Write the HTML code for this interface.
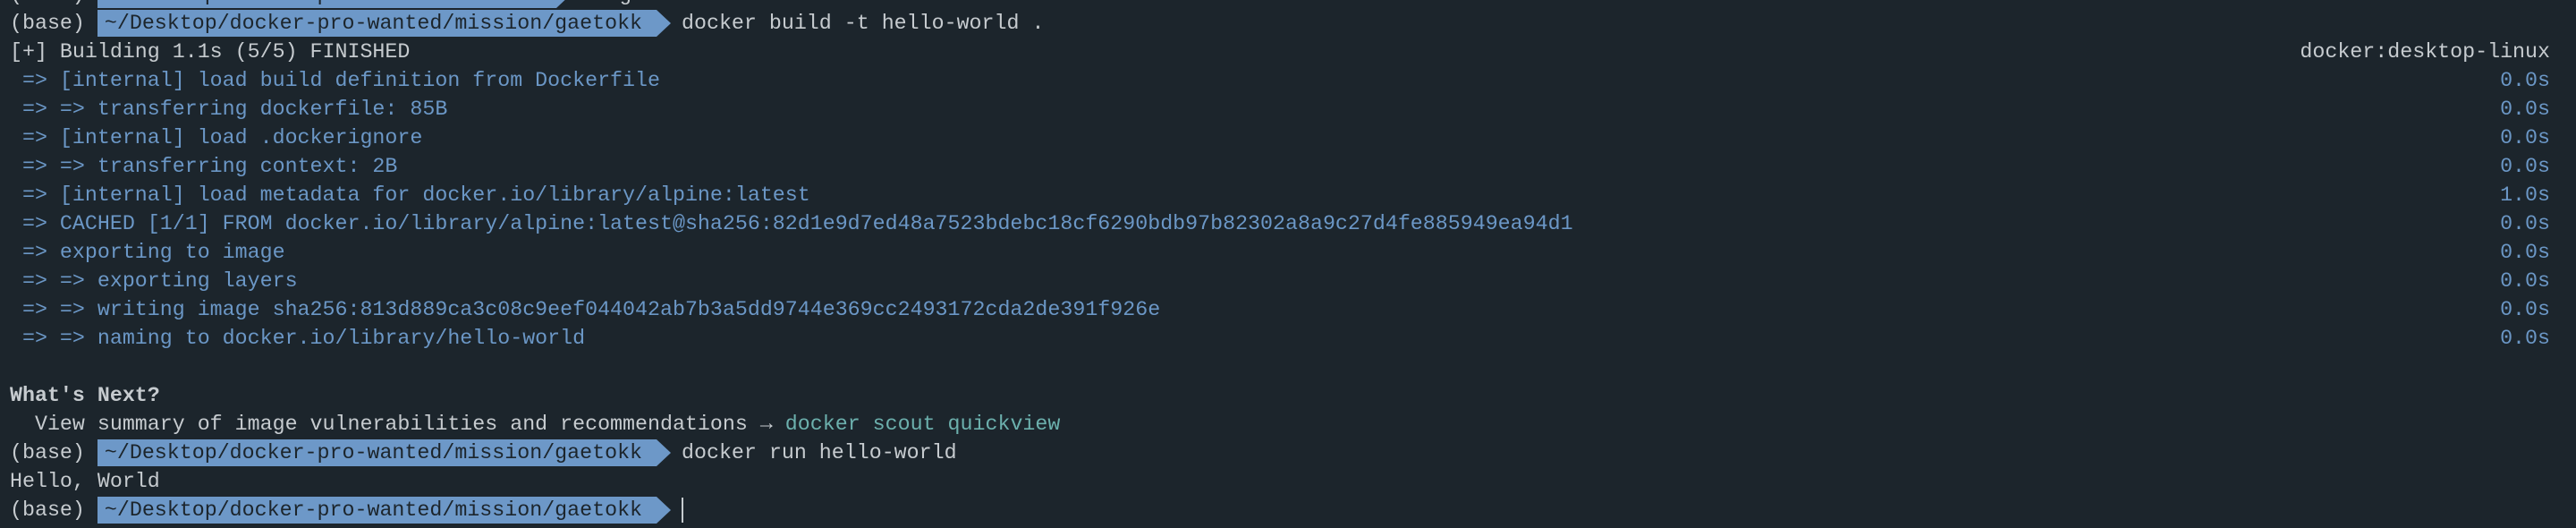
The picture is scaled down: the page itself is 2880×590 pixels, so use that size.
<!DOCTYPE html>
<html><head><meta charset="utf-8"><style>
html,body{margin:0;padding:0;background:#1c252c;width:2880px;height:590px;overflow:hidden}
body{font-family:"Liberation Mono","DejaVu Sans Mono",monospace;font-size:23.3px;color:#c6cbcf;position:relative}
.l{position:absolute;left:11px;height:32px;line-height:32px;white-space:pre;width:2840px}
.b{color:#6b97c6}
.t{color:#6cb0ad}
.r{position:absolute;right:0;top:0}
.p{display:inline-block;position:relative;background:#6d98c8;color:#1c252c;height:30px;line-height:30px;vertical-align:top;margin-top:1px;padding:0 16px 0 8px}
.p:after{content:"";position:absolute;right:-16px;top:0;border-left:16px solid #6d98c8;border-top:15px solid transparent;border-bottom:15px solid transparent}
.cur{display:inline-block;width:2px;height:28px;background:#c6cbcf;vertical-align:top;margin-top:2px}
</style></head><body>
<div class="l" style="top:-22px">(base) <span class="p">~/Desktop/docker-pro-wanted/mission</span>  cd gaetokk</div>
<div class="l" style="top:10px">(base) <span class="p">~/Desktop/docker-pro-wanted/mission/gaetokk</span>  docker build -t hello-world .</div>
<div class="l" style="top:42px">[+] Building 1.1s (5/5) FINISHED<span class="r">docker:desktop-linux</span></div>
<div class="l b" style="top:74px"> =&gt; [internal] load build definition from Dockerfile<span class="r">0.0s</span></div>
<div class="l b" style="top:106px"> =&gt; =&gt; transferring dockerfile: 85B<span class="r">0.0s</span></div>
<div class="l b" style="top:138px"> =&gt; [internal] load .dockerignore<span class="r">0.0s</span></div>
<div class="l b" style="top:170px"> =&gt; =&gt; transferring context: 2B<span class="r">0.0s</span></div>
<div class="l b" style="top:202px"> =&gt; [internal] load metadata for docker.io/library/alpine:latest<span class="r">1.0s</span></div>
<div class="l b" style="top:234px"> =&gt; CACHED [1/1] FROM docker.io/library/alpine:latest@sha256:82d1e9d7ed48a7523bdebc18cf6290bdb97b82302a8a9c27d4fe885949ea94d1<span class="r">0.0s</span></div>
<div class="l b" style="top:266px"> =&gt; exporting to image<span class="r">0.0s</span></div>
<div class="l b" style="top:298px"> =&gt; =&gt; exporting layers<span class="r">0.0s</span></div>
<div class="l b" style="top:330px"> =&gt; =&gt; writing image sha256:813d889ca3c08c9eef044042ab7b3a5dd9744e369cc2493172cda2de391f926e<span class="r">0.0s</span></div>
<div class="l b" style="top:362px"> =&gt; =&gt; naming to docker.io/library/hello-world<span class="r">0.0s</span></div>
<div class="l" style="top:426px;font-weight:bold">What's Next?</div>
<div class="l" style="top:458px">  View summary of image vulnerabilities and recommendations → <span class="t">docker scout quickview</span></div>
<div class="l" style="top:490px">(base) <span class="p">~/Desktop/docker-pro-wanted/mission/gaetokk</span>  docker run hello-world</div>
<div class="l" style="top:522px">Hello, World</div>
<div class="l" style="top:554px">(base) <span class="p">~/Desktop/docker-pro-wanted/mission/gaetokk</span>  <span class="cur"></span></div>
</body></html>
